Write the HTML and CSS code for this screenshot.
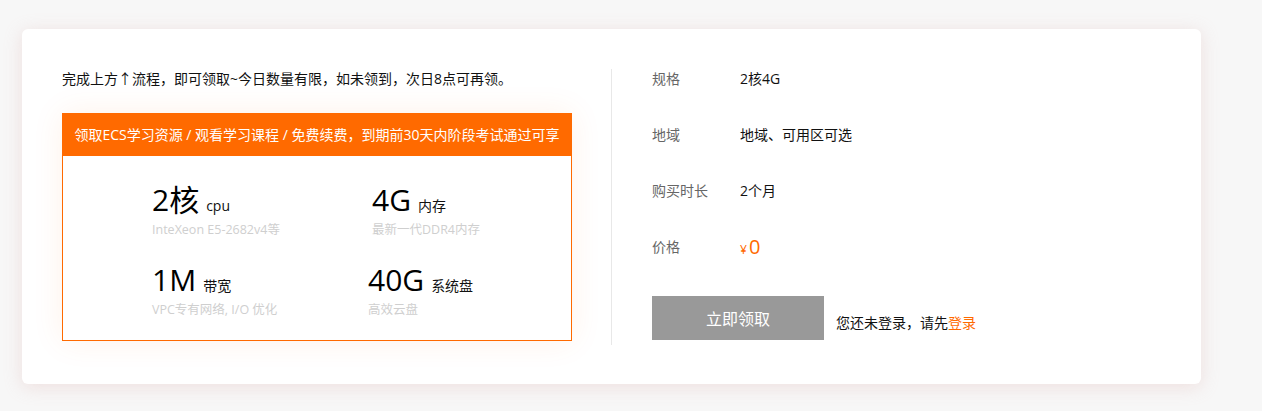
FILE: index.html
```html
<!DOCTYPE html>
<html lang="zh-CN">
<head>
<meta charset="utf-8">
<title>领取ECS</title>
<link rel="stylesheet" href="styles.css">
</head>
<body>
<div class="page">
  <div class="card">
    <div class="left">
      <p class="tip">完成上方↑流程，即可领取~今日数量有限，如未领到，次日8点可再领。</p>
      <div class="box">
        <div class="box-head">领取ECS学习资源 / 观看学习课程 / 免费续费，到期前30天内阶段考试通过可享</div>
        <div class="specs">
          <div class="spec">
            <div class="spec-main"><span class="big">2核</span><span class="unit">cpu</span></div>
            <div class="spec-sub">InteXeon E5-2682v4等</div>
          </div>
          <div class="spec">
            <div class="spec-main"><span class="big">4G</span><span class="unit">内存</span></div>
            <div class="spec-sub">最新一代DDR4内存</div>
          </div>
          <div class="spec">
            <div class="spec-main"><span class="big">1M</span><span class="unit">带宽</span></div>
            <div class="spec-sub">VPC专有网络, I/O 优化</div>
          </div>
          <div class="spec spec-shift">
            <div class="spec-main"><span class="big">40G</span><span class="unit">系统盘</span></div>
            <div class="spec-sub">高效云盘</div>
          </div>
        </div>
      </div>
    </div>
    <div class="right">
      <div class="row"><span class="label">规格</span><span class="value">2核4G</span></div>
      <div class="row"><span class="label">地域</span><span class="value">地域、可用区可选</span></div>
      <div class="row"><span class="label">购买时长</span><span class="value">2个月</span></div>
      <div class="row row-price"><span class="label">价格</span><span class="price"><span class="yen">¥</span><span class="amount">0</span></span></div>
      <div class="action">
        <button class="btn" type="button">立即领取</button>
        <span class="login-tip">您还未登录，请先<a class="login-link" href="#">登录</a></span>
      </div>
    </div>
  </div>
</div>
</body>
</html>
```

FILE: styles.css
```css
* { box-sizing: border-box; }
html, body { margin: 0; padding: 0; }
body {
  background: #f7f7f7;
  font-family: "Open Sans", "Noto Sans CJK SC", sans-serif;
  color: #1a1a1a;
  width: 1262px;
  height: 411px;
  overflow: hidden;
}
.page {
  padding: 29px 61px 0 22px;
}
.card {
  width: 1179px;
  height: 355px;
  background: #fff;
  border-radius: 6px;
  box-shadow: 0 3px 18px rgba(220, 170, 165, 0.3);
  padding: 40px 40px 0 40px;
  display: flex;
  align-items: flex-start;
}
.left {
  width: 549px;
  flex: none;
}
.tip {
  margin: 0;
  height: 20px;
  font-size: 14px;
  line-height: 20px;
  color: #111;
  white-space: nowrap;
}
.box {
  margin-top: 24px;
  width: 510px;
  height: 228px;
  border: 1px solid #ff6a00;
  box-shadow: 0 0 30px rgba(255, 106, 0, 0.09);
}
.box-head {
  height: 42px;
  line-height: 42px;
  background: #ff6a00;
  color: #fff;
  font-size: 14px;
  text-align: center;
  white-space: nowrap;
}
.specs {
  display: grid;
  grid-template-columns: 220px 1fr;
  grid-template-rows: 57px 57px;
  row-gap: 23px;
  padding: 26px 0 0 89px;
}
.spec-shift { margin-left: -4px; }
.spec-main {
  height: 36px;
  line-height: 36px;
  white-space: nowrap;
}
.big {
  font-size: 30px;
  line-height: 36px;
  color: #000;
}
.unit {
  font-size: 14px;
  line-height: 20px;
  color: #111;
  margin-left: 7px;
}
.spec-sub {
  margin-top: 3px;
  height: 18px;
  font-size: 12.5px;
  line-height: 18px;
  color: #cfcfcf;
  white-space: nowrap;
}
.right {
  flex: 1;
  height: 276px;
  border-left: 1px solid #e8e8e8;
  padding: 0 0 0 40px;
}
.row {
  display: flex;
  align-items: center;
  height: 20px;
  font-size: 14px;
  line-height: 20px;
  margin-bottom: 36px;
}
.row-price { margin-bottom: 39px; }
.label {
  width: 88px;
  flex: none;
  color: #666;
}
.value { color: #111; }
.price {
  color: #ff6a00;
  line-height: 20px;
  padding-top: 2px;
}
.yen { font-size: 12px; margin-right: 2px; line-height: 20px; }
.amount { font-size: 20px; line-height: 20px; }
.action {
  display: flex;
  align-items: flex-end;
  height: 44px;
}
.btn {
  width: 172px;
  height: 44px;
  border: 0;
  margin: 0;
  padding: 0;
  background: #999;
  color: #fff;
  font-family: inherit;
  font-size: 16px;
  cursor: pointer;
}
.login-tip {
  margin-left: 12px;
  margin-bottom: 7px;
  font-size: 14px;
  line-height: 20px;
  color: #111;
}
.login-link {
  color: #ff6a00;
  text-decoration: none;
}
```
